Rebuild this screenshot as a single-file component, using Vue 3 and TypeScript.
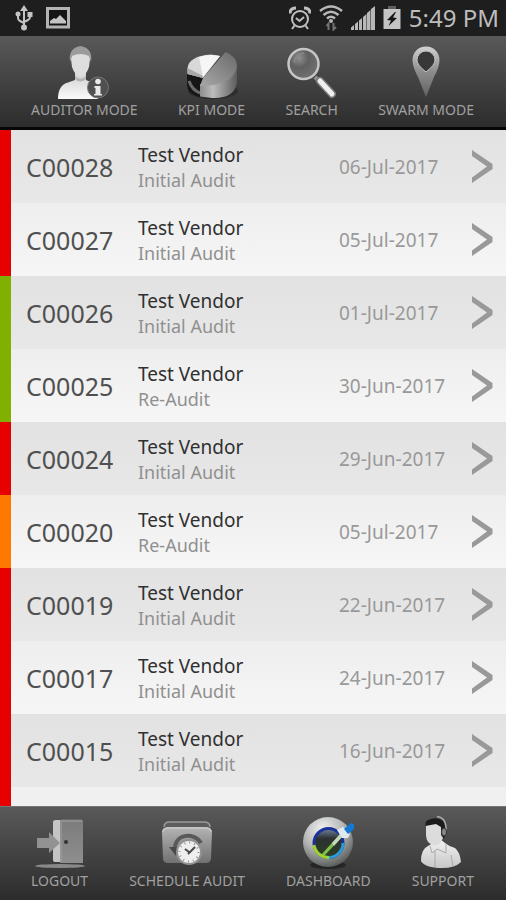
<script setup lang="ts">
type Status = 'red' | 'green' | 'orange'

interface Audit {
  code: string
  vendor: string
  kind: string
  date: string
  status: Status
}

const audits: Audit[] = [
  { code: 'C00028', vendor: 'Test Vendor', kind: 'Initial Audit', date: '06-Jul-2017', status: 'red' },
  { code: 'C00027', vendor: 'Test Vendor', kind: 'Initial Audit', date: '05-Jul-2017', status: 'red' },
  { code: 'C00026', vendor: 'Test Vendor', kind: 'Initial Audit', date: '01-Jul-2017', status: 'green' },
  { code: 'C00025', vendor: 'Test Vendor', kind: 'Re-Audit', date: '30-Jun-2017', status: 'green' },
  { code: 'C00024', vendor: 'Test Vendor', kind: 'Initial Audit', date: '29-Jun-2017', status: 'red' },
  { code: 'C00020', vendor: 'Test Vendor', kind: 'Re-Audit', date: '05-Jul-2017', status: 'orange' },
  { code: 'C00019', vendor: 'Test Vendor', kind: 'Initial Audit', date: '22-Jun-2017', status: 'red' },
  { code: 'C00017', vendor: 'Test Vendor', kind: 'Initial Audit', date: '24-Jun-2017', status: 'red' },
  { code: 'C00015', vendor: 'Test Vendor', kind: 'Initial Audit', date: '16-Jun-2017', status: 'red' },
]
</script>

<template>
  <div class="screen">
    <svg class="defs" width="0" height="0" aria-hidden="true">
      <defs>
        <linearGradient id="white" x1="0" y1="0" x2="0" y2="1">
          <stop offset="0" stop-color="#d0d0d0" />
          <stop offset="1" stop-color="#fafafa" />
        </linearGradient>
        <linearGradient id="silver" x1="0" y1="0" x2="0" y2="1">
          <stop offset="0" stop-color="#b4b4b4" />
          <stop offset="1" stop-color="#717171" />
        </linearGradient>
        <linearGradient id="door" x1="0" y1="0" x2="0" y2="1">
          <stop offset="0" stop-color="#7c7c7c" />
          <stop offset="1" stop-color="#8e8e8e" />
        </linearGradient>
        <linearGradient id="pin" x1="0" y1="0" x2="0" y2="1">
          <stop offset="0" stop-color="#d2d2d2" />
          <stop offset="0.5" stop-color="#8c8c8c" />
          <stop offset="1" stop-color="#626262" />
        </linearGradient>
        <linearGradient id="shirt" x1="0" y1="0" x2="0" y2="1">
          <stop offset="0" stop-color="#f2f2f2" />
          <stop offset="1" stop-color="#c8c8c8" />
        </linearGradient>
        <linearGradient id="slice" x1="0" y1="1" x2="1" y2="0">
          <stop offset="0" stop-color="#a8a8a8" />
          <stop offset="1" stop-color="#6a6a6a" />
        </linearGradient>
        <linearGradient id="rim" x1="0" y1="0" x2="1" y2="0">
          <stop offset="0" stop-color="#8d8d8d" />
          <stop offset="0.35" stop-color="#bcbcbc" />
          <stop offset="1" stop-color="#5c5c5c" />
        </linearGradient>
        <radialGradient id="lens" cx="0.35" cy="0.3" r="0.8">
          <stop offset="0" stop-color="#8f8f8f" />
          <stop offset="0.4" stop-color="#606060" />
          <stop offset="1" stop-color="#747474" />
        </radialGradient>
        <radialGradient id="ball" cx="0.4" cy="0.25" r="0.8">
          <stop offset="0" stop-color="#f2f2f2" />
          <stop offset="0.5" stop-color="#b5b8b6" />
          <stop offset="1" stop-color="#4f5351" />
        </radialGradient>
        <linearGradient id="dial" x1="0" y1="0" x2="0" y2="1">
          <stop offset="0" stop-color="#7384a0" />
          <stop offset="0.35" stop-color="#2b3132" />
          <stop offset="1" stop-color="#2b4020" />
        </linearGradient>
      </defs>
    </svg>

    <header class="statusbar">
      <div class="status-left">
        <svg width="18" height="26" viewBox="0 0 18 26" fill="none" stroke="#c4c4c4" stroke-width="2">
          <path d="M9 4V22M3 9V13Q3 15 5 16L9 18M15 9V12Q15 14 13 15L9 17" />
          <path d="M9 0l4 6H5z" fill="#c4c4c4" stroke="none" />
          <circle cx="9" cy="22.500" r="3" fill="#c4c4c4" stroke="none" />
          <circle cx="3" cy="9" r="2.500" fill="#c4c4c4" stroke="none" />
          <path d="M12.500 7h5v5h-5z" fill="#c4c4c4" stroke="none" />
        </svg>
        <svg width="24" height="22" viewBox="0 0 24 22">
          <rect x="1.500" y="1.500" width="21" height="18.500" fill="#151515" stroke="#b4b4b4" stroke-width="3" />
          <path d="M4 16.500V14l4-3 2 1 4-4 3 3 3 3v2.500z" fill="#c4c4c4" />
        </svg>
      </div>
      <div class="status-right">
        <svg width="22" height="24" viewBox="0 0 22 24" fill="none" stroke="#c0c0c0" stroke-width="2">
          <circle cx="11" cy="13" r="8" />
          <path d="M7 12l3.500 3 4.500-4M5.500 19.500L3 23M16.500 19.500L19 23" />
          <path d="M1 7.500Q1 2 7 2M21 7.500Q21 2 15 2" stroke-width="3" />
        </svg>
        <svg width="24" height="26" viewBox="0 0 24 26" fill="none" stroke="#b8b8b8" stroke-width="2.500">
          <path d="M1 6Q12-3 23 6M4.500 10Q12 3.500 19.500 10M8 13.500Q12 10 16 13.500" />
          <circle cx="12" cy="16" r="2" fill="#b8b8b8" stroke="none" />
          <path d="M9.500 25V18.500L7.500 21M14.500 18V24.500L17 22" stroke="#737373" stroke-width="2" />
        </svg>
        <svg width="24" height="24" viewBox="0 0 24 24" fill="#b8b8b8">
          <path d="M0 24v-2.500L3 19v5zM4 24v-6l3-2.500V24zM8 24v-9.500l3-2.500v12zM12 24V11l3.500-3v16zM16 24V7l3.500-3v20zM20 24V3l4-3v24z" />
        </svg>
        <svg width="18" height="24" viewBox="0 0 18 24">
          <path d="M5 0h8v3H5z" fill="#5f5f5f" />
          <path d="M0.500 3h17v20h-17z" fill="#c4c4c4" />
          <path d="M12 6L4 14l4 .5L5.500 20l8.500-8-4-.5L13 6z" fill="#161616" />
        </svg>
        <span class="clock">5:49 PM</span>
      </div>
    </header>

    <nav class="bar bar-top" aria-label="Modes">
      <button type="button" class="item">
        <svg class="icon" viewBox="0 0 52 56">
          <path d="M0 55Q0 41 10 38.500L17 36V28h11v8l7 3q5 3 5 16z" fill="url(#white)" />
          <path d="M17 32q5 5 11 0v3q-6 5-11 0z" fill="#b5b5b5" />
          <path d="M13 15Q13 6 22.500 6Q32 6 32 15L31 23Q28 32 22.500 32Q17 32 14 23z" fill="#dedede" />
          <path d="M12 18Q10 4 22.500 2Q35 4 33 18L31 12Q22 8 14 12z" fill="#9c9c9c" />
          <circle cx="40" cy="43.500" r="10.500" fill="#505050" stroke="#777" />
          <circle cx="40" cy="37.500" r="2.800" fill="#e9e9e9" />
          <path d="M36.500 42h6v8H44v1.500h-8V50h1.500v-6h-1z" fill="#e9e9e9" />
        </svg>
        <span>AUDITOR MODE</span>
      </button>
      <button type="button" class="item">
        <svg class="icon" viewBox="0 0 52 56">
          <ellipse cx="27" cy="47" rx="25" ry="8" fill="#1d1d1d" opacity="0.500" />
          <path d="M1 29L17 34L14 42V53Q1 50 1 40z" fill="#161616" />
          <path d="M3 37Q6 46 14 49" fill="none" stroke="#6b6b6b" stroke-width="3" />
          <path d="M1.500 24Q3 12 25 10.500L34 12 17 34L1.500 30z" fill="#d8d8d8" />
          <path d="M1.500 24L17 32V34L1.500 30z" fill="#a9a9a9" />
          <path d="M13 13Q23 9.500 34 12L17 33z" fill="#f6f6f6" />
          <path d="M14 40Q43 42 51 22V39Q48 55 26 54L14 52.500z" fill="url(#rim)" />
          <path d="M39.500 8Q51 12 51 23Q47 42 14 42L17 34z" fill="url(#slice)" />
        </svg>
        <span>KPI MODE</span>
      </button>
      <button type="button" class="item">
        <svg class="icon" viewBox="0 0 52 56">
          <path d="M29 33l6 6" stroke="#929292" stroke-width="4" />
          <path d="M34 37L46 50" stroke="#7a7a7a" stroke-width="8" stroke-linecap="round" />
          <path d="M34 37L46 50" stroke="#f0f0f0" stroke-width="5" stroke-linecap="round" />
          <circle cx="17.500" cy="20" r="15" fill="url(#lens)" stroke="#c6c6c6" stroke-width="2.500" />
          <path d="M8 19Q9 10 18 9" fill="none" stroke="#888" stroke-width="1.500" />
        </svg>
        <span>SEARCH</span>
      </button>
      <button type="button" class="item">
        <svg class="icon" viewBox="0 0 52 56">
          <path d="M26 2.500C18 2.500 12.500 8.500 12.500 16C12.500 22 15 27 18 33L26 53L34 33C37 27 39.500 22 39.500 16C39.500 8.500 34 2.500 26 2.500z" fill="url(#pin)" />
          <path d="M26 7a9 9 0 0 1 9 9q0 5-9 12q-9-7-9-12a9 9 0 0 1 9-9z" fill="#383838" stroke="#c0c0c0" stroke-width="1" />
        </svg>
        <span>SWARM MODE</span>
      </button>
    </nav>

    <main class="list">
      <ul>
        <li v-for="audit in audits" :key="audit.code">
          <button type="button" class="row" :class="audit.status">
            <span class="code">{{ audit.code }}</span>
            <span class="info">
              <span class="vendor">{{ audit.vendor }}</span>
              <span class="kind">{{ audit.kind }}</span>
            </span>
            <span class="date">{{ audit.date }}</span>
            <svg class="chevron" width="22" height="34" viewBox="0 0 22 34" fill="#999">
              <path d="M1 0L21.500 14V19L1 33V27.500L16 16.500L1 6z" />
            </svg>
          </button>
        </li>
        <li class="rest red"></li>
      </ul>
    </main>

    <nav class="bar bar-bottom" aria-label="Main">
      <button type="button" class="item">
        <svg class="icon" viewBox="0 0 52 56">
          <ellipse cx="26" cy="51" rx="25" ry="2" fill="#898989" />
          <path d="M19 7q0-2 3-2h6v42h-6q-3 0-3-2z" fill="#c4c4c4" />
          <path d="M26 6q0-1.500 2-1.500h19q2 0 2 2V48H26z" fill="url(#door)" />
          <path d="M27 47V6h21" fill="none" stroke="#a2a2a2" />
          <circle cx="32" cy="27" r="2" fill="#333" />
          <path d="M3 23h12v-6l11 11-11 10v-5H3z" fill="#929292" />
        </svg>
        <span>LOGOUT</span>
      </button>
      <button type="button" class="item">
        <svg class="icon" viewBox="0 0 52 56">
          <path d="M3 12q0-5 6-5h34q6 0 6 5" fill="#5d5d5d" stroke="#999" stroke-width="1.500" />
          <path d="M1 18q0-6 6-6h38q6 0 6 6l-1 25q0 5-5 5H7q-5 0-5-5z" fill="url(#silver)" />
          <path d="M2 17q0-4 6-4h36q6 0 6 4" fill="none" stroke="#c9c9c9" stroke-width="1.500" />
          <path d="M14 36C12 19 33 16 40 28" fill="none" stroke="#5a5a5a" stroke-width="4" />
          <path d="M8 32h13l-6 9z" fill="#4a4a4a" />
          <circle cx="28" cy="37" r="12" fill="#eee" stroke="#929292" stroke-width="2" />
          <circle cx="28" cy="37" r="9.500" fill="none" stroke="#8e8e8e" stroke-width="2" stroke-dasharray="1 3.970" />
          <path d="M27 39l7-7M28 37l-4-3" stroke="#484848" stroke-width="2" />
        </svg>
        <span>SCHEDULE AUDIT</span>
      </button>
      <button type="button" class="item">
        <svg class="icon" viewBox="0 0 52 56">
          <ellipse cx="26" cy="50" rx="18" ry="4" fill="#151515" opacity="0.600" />
          <circle cx="26" cy="27" r="25" fill="url(#ball)" />
          <circle cx="26.500" cy="28" r="14.500" fill="url(#dial)" stroke="#1b3398" stroke-width="3" />
          <path d="M12 30A14.500 14.500 0 0 0 27 42.500" fill="none" stroke="#9ed42c" stroke-width="3" />
          <path d="M27 42.500A14.500 14.500 0 0 0 41 28" fill="none" stroke="#2b9bd4" stroke-width="3" />
          <path d="M19 40L38 19L40 22L23 40z" fill="#7fc04a" />
          <path d="M30 28L38 19L40 22L32 31z" fill="#c3d8bd" />
          <path d="M35 15L41 12L48 19L46 23L40 23z" fill="#dfe9ee" />
          <path d="M42 14l7-6 3 1v5l-6 5z" fill="#1279d6" />
        </svg>
        <span>DASHBOARD</span>
      </button>
      <button type="button" class="item">
        <svg class="icon" viewBox="0 0 52 56">
          <path d="M4 46Q4 34 11 31L16 28L23 24L28 28Q33 32 38 33Q43 37 44 47Q38 53 25 53Q8 53 4 46z" fill="url(#shirt)" />
          <path d="M13 31l2 7 5-4 9 4 0-9M18 36v16M34 40l2 12" fill="none" stroke="#aaa" stroke-width="1" />
          <path d="M9 8h15l2 15q-3 7-8 8Q9 29 9 20z" fill="#dcdcdc" />
          <path d="M8.500 11Q8 6 11 5Q20 1 26 6Q30 12 27 24L24 20V12L19 9z" fill="#1c1c1c" />
          <path d="M20 1.500q10 1 9 15" fill="none" stroke="#a9a9a9" stroke-width="1.500" />
          <ellipse cx="27" cy="17" rx="2.500" ry="4" fill="#888" stroke="#303030" />
        </svg>
        <span>SUPPORT</span>
      </button>
    </nav>
  </div>
</template>

<style>
body {
  margin: 0;
  background: #1e1e1e;
}
</style>

<style scoped>
.screen {
  display: flex;
  flex-direction: column;
  height: 100vh;
  overflow: hidden;
  font-family: 'Noto Sans', 'Open Sans', sans-serif;
}

.defs {
  position: absolute;
}

button {
  border: 0;
  padding: 0;
  margin: 0;
  background: none;
  font: inherit;
  color: inherit;
  cursor: pointer;
}

.statusbar {
  display: flex;
  flex: none;
  align-items: center;
  justify-content: space-between;
  height: 36px;
  padding: 0 7px 0 15px;
  background: #1e1e1e;
}

.status-left {
  display: flex;
  align-items: center;
  gap: 13px;
}

.status-right {
  display: flex;
  align-items: center;
  gap: 8px;
}

.clock {
  font-size: 24px;
  line-height: 34px;
  color: #bdbdbd;
}

.bar {
  display: flex;
  flex: none;
  justify-content: space-between;
  box-sizing: border-box;
  height: 94px;
  padding: 8px 32px 0 31px;
  background: linear-gradient(#595959, #2c2c2c);
  color: #a0a0a0;
}

.bar-top {
  border-bottom: 3px solid #060606;
}

.bar-bottom {
  border-top: 1px solid #777;
}

.item {
  display: flex;
  flex-direction: column;
  align-items: center;
  justify-content: flex-start;
  font-size: 14px;
  line-height: 20px;
  white-space: nowrap;
}

.icon {
  display: block;
  width: 52px;
  height: 56px;
}

.list {
  flex: 1;
  min-height: 0;
  overflow: hidden;
  background: #f0f0f0;
}

ul {
  display: flex;
  flex-direction: column;
  height: 100%;
  margin: 0;
  padding: 0;
  list-style: none;
}

.row {
  display: grid;
  grid-template-columns: 112px 1fr 105px 22px;
  align-items: center;
  box-sizing: border-box;
  width: 100%;
  height: 73px;
  padding: 0 13px 0 15px;
  border-left: 11px solid;
  text-align: left;
  background: linear-gradient(#eeeeee, #f6f6f6);
}

li:nth-child(odd) .row {
  background: linear-gradient(#e2e2e2, #e8e8e8);
}

.row.red,
.rest.red {
  border-left-color: #e60000;
}

.row.green {
  border-left-color: #80b000;
}

.row.orange {
  border-left-color: #ff7800;
}

.rest {
  flex: 1;
  border-left: 11px solid;
}

.code {
  font-size: 25px;
  color: #505050;
}

.info {
  display: flex;
  flex-direction: column;
  padding-top: 2px;
  line-height: 25px;
}

.vendor {
  font-size: 19px;
  color: #303030;
}

.kind {
  font-size: 18px;
  color: #909090;
}

.date {
  font-size: 19px;
  white-space: nowrap;
  color: #999;
}

.row {
  column-gap: 0;
}

.chevron {
  display: block;
}

.date {
  margin-left: -27px;
}
</style>
